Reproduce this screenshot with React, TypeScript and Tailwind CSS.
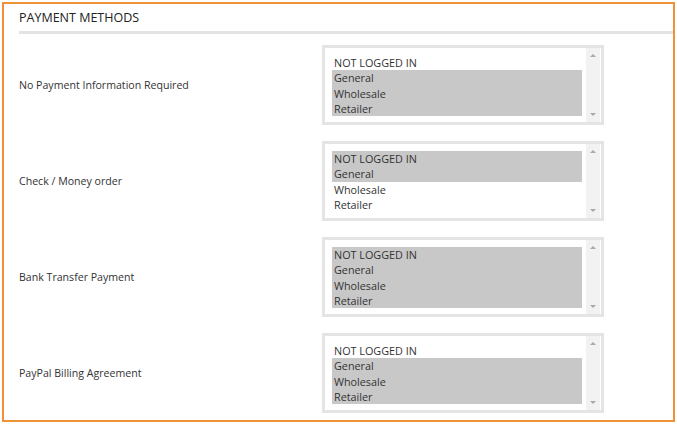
import React from 'react';

const rows = [
  { label: 'No Payment Information Required', selected: [1, 2, 3] },
  { label: 'Check / Money order', selected: [0, 1] },
  { label: 'Bank Transfer Payment', selected: [0, 1, 2, 3] },
  { label: 'PayPal Billing Agreement', selected: [1, 2, 3] },
];

const options = ['NOT LOGGED IN', 'General', 'Wholesale', 'Retailer'];

function MultiSelect({ selected }: { selected: number[] }) {
  return (
    <div className="w-[282px] h-[80px] border-[3px] border-[#e4e4e4] bg-white flex">
      <div className="flex-1 pl-[7px] pr-[4px] pt-[7px]">
        {options.map((o, i) => (
          <div
            key={o}
            className={`h-[15.3px] leading-[15.3px] pl-[2px] text-[10.8px] text-[#333] ${selected.includes(i) ? 'bg-[#c8c8c8]' : ''}`}
          >
            {o}
          </div>
        ))}
      </div>
      <div className="w-[14px] bg-[#f2f2f2] flex flex-col items-center justify-between py-[6px] mr-[1px]">
        <div className="w-0 h-0 border-x-[3px] border-x-transparent border-b-[3px] border-b-[#a8a8a8]" />
        <div className="w-0 h-0 border-x-[3px] border-x-transparent border-t-[3px] border-t-[#a8a8a8]" />
      </div>
    </div>
  );
}

export default function App() {
  return (
    <div className="w-[677px] h-[424px] bg-white p-[2px]" style={{ fontFamily: '"Open Sans", "Liberation Sans", sans-serif' }}>
      <div className="w-full h-full border-2 border-[#ef9135] pl-[15px]">
        <div className="pt-[5px] pb-[5px] text-[12.5px] text-[#222] leading-[17px]">PAYMENT METHODS</div>
        <div className="h-[3px] bg-[#e3e3e3]" />
        <div className="pt-[3px]">
          {rows.map(r => (
            <div key={r.label} className="h-[96px] flex items-center">
              <div className="w-[303px] pt-[2px] text-[10.6px] text-[#333]">{r.label}</div>
              <MultiSelect selected={r.selected} />
            </div>
          ))}
        </div>
      </div>
    </div>
  );
}
